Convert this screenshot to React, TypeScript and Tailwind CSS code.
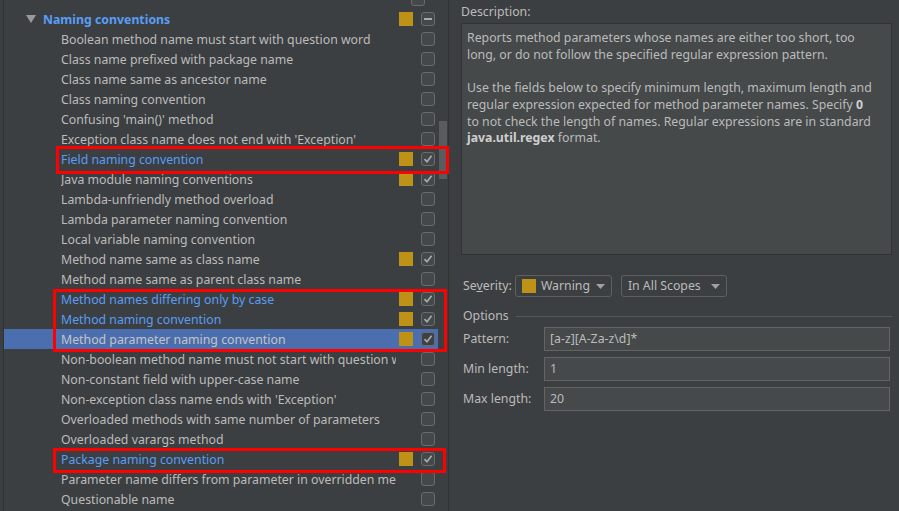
import type { ReactNode } from 'react'

type Row = {
  label: string
  blue?: boolean
  orange?: boolean
  checked?: boolean
  selected?: boolean
}

const rows: Row[] = [
  { label: 'Boolean method name must start with question word' },
  { label: 'Class name prefixed with package name' },
  { label: 'Class name same as ancestor name' },
  { label: 'Class naming convention' },
  { label: "Confusing 'main()' method" },
  { label: "Exception class name does not end with 'Exception'" },
  { label: 'Field naming convention', blue: true, orange: true, checked: true },
  { label: 'Java module naming conventions', orange: true, checked: true },
  { label: 'Lambda-unfriendly method overload' },
  { label: 'Lambda parameter naming convention' },
  { label: 'Local variable naming convention' },
  { label: 'Method name same as class name', orange: true, checked: true },
  { label: 'Method name same as parent class name' },
  { label: 'Method names differing only by case', blue: true, orange: true, checked: true },
  { label: 'Method naming convention', blue: true, orange: true, checked: true },
  { label: 'Method parameter naming convention', orange: true, checked: true, selected: true },
  { label: 'Non-boolean method name must not start with question word' },
  { label: 'Non-constant field with upper-case name' },
  { label: "Non-exception class name ends with 'Exception'" },
  { label: 'Overloaded methods with same number of parameters' },
  { label: 'Overloaded varargs method' },
  { label: 'Package naming convention', blue: true, orange: true, checked: true },
  { label: 'Parameter name differs from parameter in overridden method' },
  { label: 'Questionable name' }
]

const Checkbox = ({ state, dark }: { state: 'off' | 'on' | 'mixed'; dark?: boolean }) => (
  <div
    className={`w-[14px] h-[14px] rounded-[3px] border border-[#6b6b6b] flex items-center justify-center ${
      dark ? 'bg-[#3d4044]' : 'bg-[#43494a]'
    }`}
  >
    {state === 'on' && (
      <svg width="10" height="10" viewBox="0 0 10 10">
        <polyline points="1.5,5.2 4,7.8 8.6,1.8" fill="none" stroke="#a9a9a9" strokeWidth="1.7" />
      </svg>
    )}
    {state === 'mixed' && <div className="w-[8px] h-[2px] bg-[#a9a9a9]" />}
  </div>
)

const Swatch = () => <div className="w-[14px] h-[14px] shrink-0 bg-[#be9117]" />

const TreeRow = ({ row }: { row: Row }) => (
  <div className={`h-5 flex items-center ${row.selected ? 'bg-[#4b6eaf]' : ''}`}>
    <div
      className={`ml-[57px] w-[335px] h-5 pt-px leading-[19px] overflow-hidden whitespace-nowrap ${
        row.blue ? 'text-[#589df6]' : row.selected ? 'text-[#c4c4c4]' : 'text-[#bbbbbb]'
      }`}
    >
      {row.label}
    </div>
    <div className="ml-[3px] w-[14px]">{row.orange && <Swatch />}</div>
    <div className="ml-[8px]">
      <Checkbox state={row.checked ? 'on' : 'off'} dark={row.selected} />
    </div>
  </div>
)

const Field = ({ label, value }: { label: ReactNode; value: string }) => (
  <div className="flex items-center h-[24px]">
    <div className="w-[81px] text-[#bbbbbb]">{label}</div>
    <div className="flex-1 h-full bg-[#45494a] border border-[#646464] flex items-center px-[5px] text-[#bbbbbb]">
      {value}
    </div>
  </div>
)

const Dropdown = ({ children, width }: { children: ReactNode; width: string }) => (
  <div className={`${width} h-[22px] border border-[#5e6060] rounded-[3px] flex items-center px-[6px] gap-[5px] text-[#bbbbbb]`}>
    {children}
    <svg width="9" height="5" viewBox="0 0 9 5" className="ml-auto">
      <polygon points="0,0 9,0 4.5,5" fill="#a0a0a0" />
    </svg>
  </div>
)

export default function App() {
  return (
    <div
      className="w-[899px] h-[511px] bg-[#3c3f41] flex overflow-hidden text-[12.3px] leading-[16px]"
      style={{ fontFamily: '"Noto Sans", "Liberation Sans", sans-serif' }}
    >
      {/* left tree */}
      <div className="relative w-[449px] h-full flex pl-[3px] border-r border-[#323232]">
        <div className="w-px h-full bg-[#323232]" />
        <div className="flex-1 h-full overflow-hidden">
          <div className="-mt-[11px]">
            <div className="h-5 flex items-center justify-end pr-[13px]">
              <Checkbox state="off" />
            </div>
            <div className="h-5 flex items-center">
              <svg width="10" height="8" viewBox="0 0 10 8" className="ml-[22px]">
                <polygon points="0,0 10,0 5,8" fill="#9a9a9a" />
              </svg>
              <div className="ml-[7px] w-[356px] h-5 pt-px font-bold text-[#589df6] leading-[19px]">
                Naming conventions
              </div>
              <Swatch />
              <div className="ml-[8px]">
                <Checkbox state="mixed" />
              </div>
            </div>
            {rows.map((r) => (
              <TreeRow key={r.label} row={r} />
            ))}
          </div>
        </div>
        <div className="w-[10px] h-full">
          <div className="mt-[121px] ml-[1px] w-[8px] h-[58px] bg-[#595b5d]" />
        </div>

        <div className="absolute left-[56px] top-[146px] w-[393px] h-[28px] border-[3px] border-[#ff0000]" />
        <div className="absolute left-[53px] top-[289px] w-[394px] h-[63px] border-[3px] border-[#ff0000]" />
        <div className="absolute left-[53px] top-[448px] w-[393px] h-[25px] border-[3px] border-[#ff0000]" />
      </div>

      {/* right details */}
      <div className="flex-1 h-full pl-[12px] pr-[7px] flex flex-col">
        <div className="mt-[4px] h-[16px] text-[#bbbbbb]">Description:</div>
        <div className="mt-[3px] h-[232px] bg-[#45494a] border border-[#323232] pl-[5px] pr-[14px] pt-[6px] text-[#bbbbbb] leading-[16.7px]">
          <p>
            Reports method parameters whose names are either too short, too long, or do not follow the
            specified regular expression pattern.
          </p>
          <p className="mt-[16.7px]">
            Use the fields below to specify minimum length, maximum length and regular expression expected for
            method parameter names. Specify <b className="text-[#cfcfcf]">0</b> to not check the length of
            names. Regular expressions are in standard <b className="text-[#cfcfcf]">java.util.regex</b>{' '}
            format.
          </p>
        </div>

        <div className="mt-[20px] flex items-center pl-[2px]">
          <div className="text-[#bbbbbb]">
            Se<span className="underline">v</span>erity:
          </div>
          <div className="ml-[3px]">
            <Dropdown width="w-[97px]">
              <Swatch />
              <span>Warning</span>
            </Dropdown>
          </div>
          <div className="ml-[9px]">
            <Dropdown width="w-[106px]">
              <span>In All Scopes</span>
            </Dropdown>
          </div>
        </div>

        <div className="mt-[11px] flex items-center pl-[2px]">
          <span className="text-[#bbbbbb]">Options</span>
          <div className="ml-[7px] flex-1 h-px bg-[#515658]" />
        </div>

        <div className="mt-[3px] pl-[2px] pr-[2px] flex flex-col gap-[6px]">
          <Field label="Pattern:" value="[a-z][A-Za-z\d]*" />
          <Field label="Min length:" value="1" />
          <Field label="Max length:" value="20" />
        </div>
      </div>
    </div>
  )
}
